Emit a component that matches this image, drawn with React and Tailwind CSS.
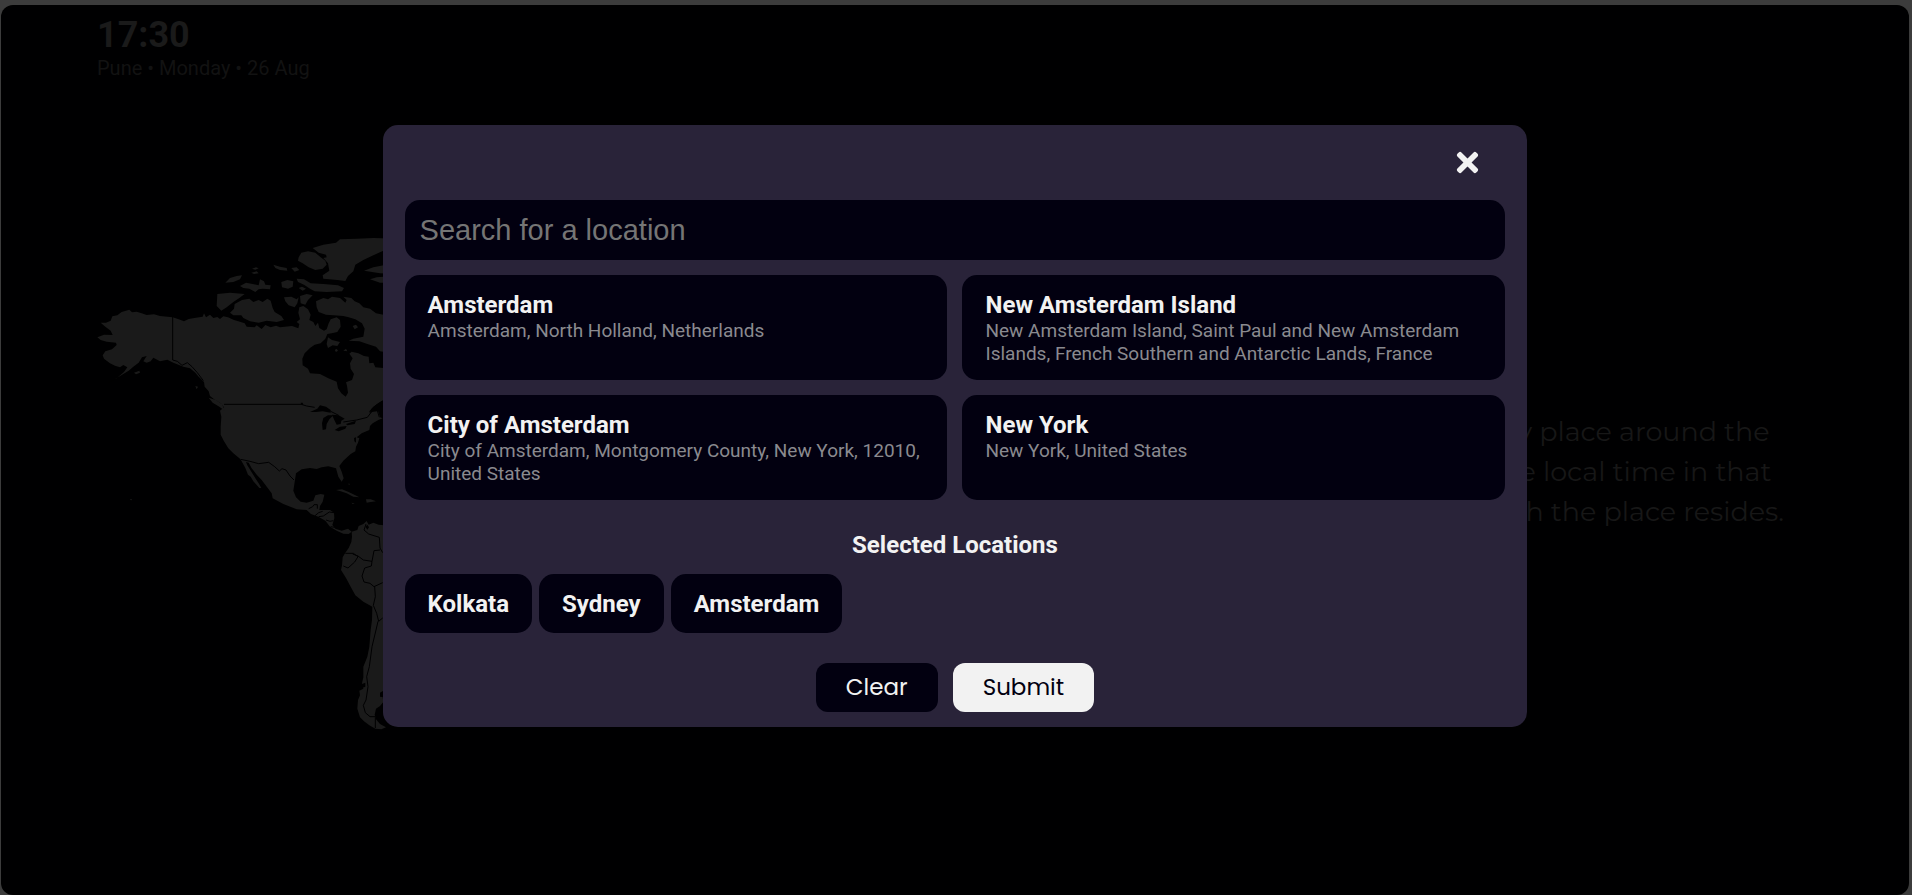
import { FaTimes } from "react-icons/fa";

const results = [
  { name: "Amsterdam", detail: "Amsterdam, North Holland, Netherlands" },
  {
    name: "New Amsterdam Island",
    detail:
      "New Amsterdam Island, Saint Paul and New Amsterdam Islands, French Southern and Antarctic Lands, France",
  },
  {
    name: "City of Amsterdam",
    detail: "City of Amsterdam, Montgomery County, New York, 12010, United States",
  },
  { name: "New York", detail: "New York, United States" },
];

const selected = ["Kolkata", "Sydney", "Amsterdam"];

const land = [
  // North and Central America
  "M62 308L78 308L92 302L97 289L112 286L125 276L148 269L156 277L170 275L185 280L200 285L222 283L240 288L278 292L296 298L312 304L326 297L348 293L368 290L372 280L378 292L390 284L400 294L412 291L420 297L430 289L444 292L462 300L480 305L494 310L500 320L524 322L530 316L545 327L556 315L572 322L588 317L600 322L636 318L655 325L658 312L650 306L660 298L655 278L658 262L670 258L684 268L692 284L688 300L700 306L706 318L714 308L718 324L732 332L740 328L746 310L752 298L770 292L780 300L782 320L772 336L755 340L742 342L736 356L722 370L704 374L690 384L674 400L667 416L668 436L684 446L690 460L720 462L745 475L770 485L774 505L784 520L797 530L804 518L801 497L798 487L816 480L822 462L812 446L810 430L818 415L808 401L815 395L835 400L852 408L866 410L868 430L880 428L886 442L910 444L940 440L940 530L910 540L890 553L875 566L868 580L880 574L894 573L900 592L908 595L895 600L878 610L870 618L868 630L845 640L830 652L838 655L834 668L828 680L826 694L812 702L790 722L778 738L785 755L791 775L785 785L775 770L768 745L745 739L725 742L710 747L690 744L665 748L648 760L645 780L640 812L648 832L662 845L680 848L700 842L706 826L722 822L733 824L728 845L720 858L718 870L750 870L762 878L763 895L757 915L766 926L785 932L804 926L815 935L806 942L790 941L770 932L750 920L736 902L715 890L693 882L680 870L650 868L610 852L578 835L575 820L545 780L530 764L515 745L506 728L498 726L502 736L516 758L528 778L536 790L544 804L538 804L520 784L512 770L504 764L496 744L484 722L480 716L460 700L445 685L432 664L422 644L422 620L424 590L420 572L432 562L420 548L405 540L390 528L386 514L374 500L372 486L356 470L346 458L330 445L310 440L280 428L262 419L240 424L220 413L212 424L200 428L190 424L200 408L186 412L176 428L160 440L146 452L125 465L104 478L78 491L110 475L132 456L142 442L130 435L120 442L105 437L90 430L72 416L68 406L76 394L96 388L110 375L108 368L80 365L62 360L52 352L72 344L98 345L92 332L76 320Z",
  // Vancouver Island, Kodiak, Haida Gwaii
  "M386 533L408 540L426 552L434 572L418 560L398 548Z",
  "M162 458L178 452L180 458L168 463Z",
  "M346 498L354 500L350 508Z",
  // Victoria and Banks
  "M412 222L450 218L494 222L478 234L460 246L440 262L424 272L410 258Z",
  "M464 252L486 240L508 236L520 246L536 240L548 246L562 236L572 242L578 264L584 276L604 288L612 300L590 306L560 302L536 308L510 304L490 294L484 286L460 286L450 278L462 266Z",
  // Melville, Prince Patrick and neighbours
  "M436 188L450 174L470 168L486 166L480 178L460 186Z",
  "M480 198L498 188L518 192L536 196L540 178L552 184L556 194L572 196L570 208L548 206L536 208L526 216L508 206L490 204Z",
  "M514 158L530 154L536 160L522 162Z",
  "M516 146L528 142L536 145L526 149Z",
  "M580 134L600 140L620 144L622 152L600 150L586 144Z",
  "M634 144L650 142L658 150L644 155Z",
  "M604 186L622 180L640 184L638 200L624 206L606 202Z",
  "M656 204L666 200L678 206L668 212Z",
  "M612 232L634 230L650 238L656 232L652 250L644 262L626 256L616 244Z",
  "M660 228L680 222L698 226L684 240L676 254L662 250Z",
  "M650 176L672 178L692 190L730 192L774 196L792 204L786 214L740 216L704 214L690 206L672 194L654 186Z",
  // Axel Heiberg and Ellesmere
  "M656 112L664 98L684 94L706 98L722 112L736 122L740 134L728 146L706 150L686 142L668 130L654 122Z",
  "M698 84L730 74L768 68L780 58L830 56L880 54L940 56L940 92L910 92L880 106L850 120L826 134L820 154L804 168L796 183L772 180L748 178L730 176L728 166L748 152L744 130L730 114L740 112L738 104L716 98Z",
  "M852 152L880 142L940 130L940 162L900 160Z",
  "M870 178L890 172L940 168L940 188L900 188Z",
  // Baffin
  "M708 244L730 234L744 238L756 230L780 234L796 248L800 240L790 230L814 234L824 244L838 250L850 262L870 266L888 280L910 284L940 296L940 400L900 394L888 380L862 372L838 364L806 362L820 356L850 350L854 326L846 310L826 298L806 292L790 288L760 286L738 284L716 276L710 262Z",
  "M818 318L828 314L834 322L824 328Z",
  "M740 372L744 352L756 360L780 366L772 378L758 376L744 384Z",
  "M764 390L770 386L774 392L768 396Z",
  "M790 392L798 386L802 394Z",
  // Caribbean
  "M768 810L786 808L806 816L826 826L838 832L820 830L800 820L782 814Z",
  "M858 838L872 838L888 844L872 846L860 848Z",
  "M814 848L824 850L818 852Z",
  "M806 790L810 793L806 795Z",
  "M151 837L156 838L155 841L151 840Z",
  // South America
  "M815 935L832 930L836 918L850 912L860 903L866 914L880 908L896 914L940 918L940 1416L912 1420L908 1434L912 1444L900 1458L888 1466L884 1484L888 1498L900 1512L918 1522L904 1528L886 1526L868 1516L852 1504L840 1492L832 1466L834 1440L840 1426L838 1412L850 1406L846 1390L850 1372L850 1340L862 1310L868 1280L872 1230L876 1200L877 1160L850 1145L826 1126L812 1100L798 1074L783 1050L786 1036L788 1012L796 998L806 984L814 966L816 950Z",
];

const water = [
  // Great Lakes
  "M690 576L712 566L720 556L738 560L752 570L752 578L728 574L708 576Z",
  "M730 594L744 586L760 586L748 598L740 612L738 628L728 630L726 610Z",
  "M756 584L776 586L794 596L784 602L782 612L770 614L764 602Z",
  "M764 630L780 620L800 618L796 626L776 634Z",
  "M798 612L816 606L828 602L824 612L802 616Z",
  "M662 548L668 548L670 554L664 555Z",
  // Gulf of St Lawrence and Arctic channels
  "M866 576L880 560L904 544L940 536L940 552L900 560L884 570Z",
  "M726 292L744 290L748 304L734 322L724 312Z",
  "M822 654L828 652L828 668L823 664Z",
  "M846 1392L856 1388L856 1400L846 1404Z",
  "M900 1418L910 1412L912 1432L900 1430Z",
  "M856 920L862 914L867 922L862 929Z",
];

const borders = [
  "M278 290V420L292 424L306 436L322 428L336 440L352 458L370 482",
  "M432 553H664L680 558L704 562M752 574L776 586M790 606L830 600L862 592L876 574L892 572L898 592",
  "M482 718L510 724L536 731L566 727L584 740L598 753L606 746L618 750L630 768L642 780",
  "M686 866L698 860L702 854H712V866M704 888L716 878L728 874M716 890L730 888L748 876L762 878M738 900L750 904L760 902M752 920L764 922",
  "M858 912L852 930L866 942L898 952L900 984L908 998M818 1002L834 1008L850 1020L876 1024L882 992L900 990M796 1000L820 1000L834 1010L824 1026L804 1044L790 1038M876 1024L874 1038L854 1044L846 1068L852 1086L870 1090L882 1100L908 1088M884 1100L886 1130L880 1156L890 1180L896 1204L908 1194M894 1204L888 1230L876 1280L868 1340L860 1370L864 1400L858 1440L850 1456L856 1478L870 1490L886 1490M886 1492V1524",
];

function WorldMap() {
  return (
    <svg
      viewBox="0 0 930 1560"
      className="block h-[520px] w-[310px] shrink-0"
      role="img"
      aria-label="World map"
    >
      {land.map((d) => (
        <path key={d} d={d} fill="#1a1a1a" />
      ))}
      {water.map((d) => (
        <path key={d} d={d} fill="#000001" />
      ))}
      {borders.map((d) => (
        <path key={d} d={d} fill="none" stroke="#000001" strokeWidth="3" strokeLinejoin="round" />
      ))}
    </svg>
  );
}

function ResultCard({ name, detail }) {
  return (
    <button
      type="button"
      className="flex min-h-[105px] flex-col rounded-[15px] bg-[#020010] px-[23px] pt-4 pb-[15px] text-left"
    >
      <span className="text-[24px] leading-7 font-bold text-[#f2f2f2]">{name}</span>
      <span className="text-[19px] leading-[23px] text-[#8a8a8f]">{detail}</span>
    </button>
  );
}

function LocationDialog() {
  return (
    <div
      role="dialog"
      aria-modal="true"
      aria-label="Choose locations"
      className="flex w-3/5 flex-col rounded-[15px] bg-[#292339] px-[22px] pb-[15px]"
    >
      <div className="flex h-[75px] items-center justify-end pr-[22px]">
        <button type="button" aria-label="Close" className="text-[#f2f2f2]">
          <FaTimes size={31} />
        </button>
      </div>
      <input
        type="text"
        aria-label="Search for a location"
        placeholder="Search for a location"
        className="h-[60px] w-full rounded-[15px] bg-[#020010] px-[15px] font-['Liberation_Sans',sans-serif] text-[29px] text-[#f2f2f2] outline-none placeholder:text-[#757575]"
      />
      <div className="mt-[15px] grid grid-cols-2 gap-[15px]">
        {results.map((r) => (
          <ResultCard key={r.name} {...r} />
        ))}
      </div>
      <h2 className="mt-[31px] text-center text-[24px] leading-7 font-bold text-[#f2f2f2]">
        Selected Locations
      </h2>
      <div className="mt-[15px] flex flex-wrap gap-[7px]">
        {selected.map((s) => (
          <button
            key={s}
            type="button"
            className="rounded-[15px] bg-[#020010] px-[23px] pt-4 pb-[15px] text-[24px] leading-7 font-bold text-[#f2f2f2]"
          >
            {s}
          </button>
        ))}
      </div>
      <div className="mt-[30px] flex justify-center gap-[15px] font-[Poppins,Lato,sans-serif] text-[23px] leading-[49px]">
        <button type="button" className="rounded-xl bg-[#020010] px-[30px] text-[#f2f2f2]">
          Clear
        </button>
        <button type="button" className="rounded-xl bg-[#f2f2f2] px-[30px] text-[#020010]">
          Submit
        </button>
      </div>
    </div>
  );
}

export default function App() {
  return (
    <div className="h-screen overflow-hidden bg-[#3c3c3c] pt-[5px] pr-[3px] pl-px font-[Roboto,sans-serif]">
      <div className="relative h-full overflow-hidden rounded-xl bg-[#000001]">
        <header className="px-24 pt-[9px] text-[#1a1a1a]">
          <p className="text-[36px] leading-[42px] font-bold">17:30</p>
          <p className="text-[20px] leading-6 text-[#121212]">Pune • Monday • 26 Aug</p>
        </header>
        <main className="flex items-start justify-between pt-[140px] pr-[125px] pl-[79px]">
          <WorldMap />
          <p className="pt-48 text-[27px] leading-10 text-[#171717] font-[Montserrat,Inter,sans-serif]">
            Search to pick any place around the
            <br />
            globe and find the local time in that
            <br />
            time zone in which the place resides.
          </p>
        </main>
        <div className="absolute inset-0 flex items-start justify-center pt-[120px]">
          <LocationDialog />
        </div>
      </div>
    </div>
  );
}
